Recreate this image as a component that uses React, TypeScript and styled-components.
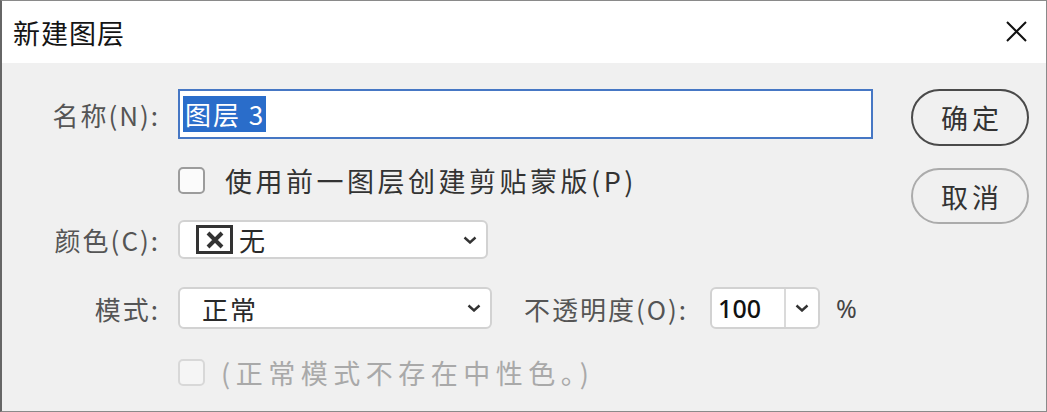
import React from 'react';
import styled, { createGlobalStyle } from 'styled-components';

const GlobalStyle = createGlobalStyle`
  html, body {
    margin: 0;
    padding: 0;
    background: #f0f0f0;
  }
  * {
    box-sizing: border-box;
  }
`;

const Window = styled.div`
  width: 1047px;
  height: 412px;
  display: flex;
  flex-direction: column;
  border: 1px solid #8a8a8a;
  border-left: 2px solid #666;
  font-family: 'Noto Sans CJK SC', sans-serif;
  background: #f0f0f0;
  overflow: hidden;
`;

const TitleBar = styled.div`
  height: 62px;
  flex: none;
  display: flex;
  align-items: center;
  justify-content: space-between;
  background: #fff;
  padding: 0 19px 0 11px;
`;

const Title = styled.div`
  font-size: 27px;
  letter-spacing: 1px;
  color: #141414;
`;

const CloseButton = styled.button`
  width: 21px;
  height: 21px;
  padding: 0;
  border: none;
  background: transparent;
  display: flex;
  margin-bottom: 2px;
`;

const Body = styled.div`
  flex: 1;
  display: flex;
  gap: 38px;
  padding: 26px 17px 0 0;
`;

const Form = styled.div`
  flex: 1;
  display: flex;
  flex-direction: column;
`;

const Row = styled.div<{ $h: number; $mt: number }>`
  display: flex;
  align-items: center;
  gap: 18px;
  height: ${(p) => p.$h}px;
  margin-top: ${(p) => p.$mt}px;
`;

const Label = styled.div`
  width: 158px;
  flex: none;
  text-align: right;
  font-size: 26px;
  letter-spacing: 2px;
  color: #555;
  white-space: nowrap;
`;

const TextInput = styled.div`
  flex: 1;
  height: 100%;
  background: #fff;
  border: 2px solid #4677c4;
  display: flex;
  align-items: center;
  padding-left: 3px;
`;

const Selected = styled.span`
  background: #2a6dca;
  color: #fff;
  font-size: 26px;
  letter-spacing: 2px;
  line-height: 36px;
  padding: 0 1px 0 2px;
`;

const CheckLine = styled.label<{ $disabled?: boolean }>`
  display: flex;
  align-items: center;
  gap: ${(p) => (p.$disabled ? 16 : 20)}px;
  font-size: 27px;
  letter-spacing: ${(p) => (p.$disabled ? 5.5 : 3.5)}px;
  color: ${(p) => (p.$disabled ? '#a9a9a9' : '#333')};
  white-space: nowrap;
`;

const Box = styled.span<{ $disabled?: boolean }>`
  width: 27px;
  height: 27px;
  border-radius: 5px;
  border: 2px solid ${(p) => (p.$disabled ? '#d8d8d8' : '#9c9c9c')};
  background: ${(p) => (p.$disabled ? '#f5f5f5' : '#fbfbfb')};
  flex: none;
`;

const Select = styled.div<{ $w: number; $pl: number }>`
  width: ${(p) => p.$w}px;
  height: 100%;
  background: #fff;
  border: 2px solid #d2d2d2;
  border-radius: 6px;
  display: flex;
  align-items: center;
  padding: 0 9px 0 ${(p) => p.$pl}px;
  font-size: 26px;
  letter-spacing: 2px;
  color: #2a2a2a;
  flex: none;
`;

const SelectValue = styled.div`
  flex: 1;
  display: flex;
  align-items: center;
  gap: 6px;
`;

const NoColorIcon = styled.span`
  width: 37px;
  height: 29px;
  border: 3px solid #333;
  display: flex;
  align-items: center;
  justify-content: center;
`;

const OpacityLabel = styled(Label)`
  width: auto;
  margin-left: 14px;
`;

const NumberBox = styled.div`
  width: 110px;
  height: 100%;
  display: flex;
  background: #fff;
  border: 2px solid #d2d2d2;
  border-radius: 6px;
  margin-left: 4px;
`;

const NumberValue = styled.div`
  width: 74px;
  display: flex;
  align-items: center;
  padding-left: 6px;
  font-family: 'Noto Sans', sans-serif;
  font-size: 25px;
  font-weight: 500;
  color: #111;
  border-right: 2px solid #dadada;
`;

const NumberArrow = styled.div`
  flex: 1;
  display: flex;
  align-items: center;
  justify-content: center;
`;

const Percent = styled.div`
  font-family: 'Noto Sans', sans-serif;
  font-size: 25px;
  color: #444;
  margin-left: -2px;
`;

const ButtonCol = styled.div`
  width: 118px;
  flex: none;
  display: flex;
  flex-direction: column;
  gap: 22px;
`;

const PillButton = styled.button<{ $primary?: boolean }>`
  height: ${(p) => (p.$primary ? 57 : 56)}px;
  border-radius: 29px;
  border: 2px solid ${(p) => (p.$primary ? '#4a4a4a' : '#ababab')};
  background: #f0f0f0;
  font-family: 'Noto Sans CJK SC', sans-serif;
  font-size: 27px;
  letter-spacing: 4px;
  padding: 0 0 0 4px;
  color: #333;
`;

const Chevron = () => (
  <svg width="14" height="8" viewBox="0 0 14 8">
    <path d="M1.5 1.5 L7 6.5 L12.5 1.5" fill="none" stroke="#333" strokeWidth="2.4" />
  </svg>
);

const App = () => {
  return (
    <>
      <GlobalStyle />
      <Window>
        <TitleBar>
          <Title>新建图层</Title>
          <CloseButton aria-label="关闭">
            <svg width="21" height="21" viewBox="0 0 21 21">
              <path d="M1 1 L20 20 M20 1 L1 20" stroke="#111" strokeWidth="2" />
            </svg>
          </CloseButton>
        </TitleBar>
        <Body>
          <Form>
            <Row $h={50} $mt={0}>
              <Label>名称(N):</Label>
              <TextInput>
                <Selected>图层 3</Selected>
              </TextInput>
            </Row>
            <Row $h={40} $mt={21}>
              <Label />
              <CheckLine>
                <Box />
                使用前一图层创建剪贴蒙版(P)
              </CheckLine>
            </Row>
            <Row $h={39} $mt={20}>
              <Label>颜色(C):</Label>
              <Select $w={310} $pl={16}>
                <SelectValue>
                  <NoColorIcon>
                    <svg width="18" height="18" viewBox="0 0 18 18">
                      <path d="M2 2 L16 16 M16 2 L2 16" stroke="#333" strokeWidth="4" />
                    </svg>
                  </NoColorIcon>
                  无
                </SelectValue>
                <Chevron />
              </Select>
            </Row>
            <Row $h={42} $mt={28}>
              <Label>模式:</Label>
              <Select $w={314} $pl={22}>
                <SelectValue>正常</SelectValue>
                <Chevron />
              </Select>
              <OpacityLabel>不透明度(O):</OpacityLabel>
              <NumberBox>
                <NumberValue>100</NumberValue>
                <NumberArrow>
                  <Chevron />
                </NumberArrow>
              </NumberBox>
              <Percent>%</Percent>
            </Row>
            <Row $h={40} $mt={23}>
              <Label />
              <CheckLine $disabled>
                <Box $disabled />
                (正常模式不存在中性色。)
              </CheckLine>
            </Row>
          </Form>
          <ButtonCol>
            <PillButton $primary>确定</PillButton>
            <PillButton>取消</PillButton>
          </ButtonCol>
        </Body>
      </Window>
    </>
  );
};

export default App;
